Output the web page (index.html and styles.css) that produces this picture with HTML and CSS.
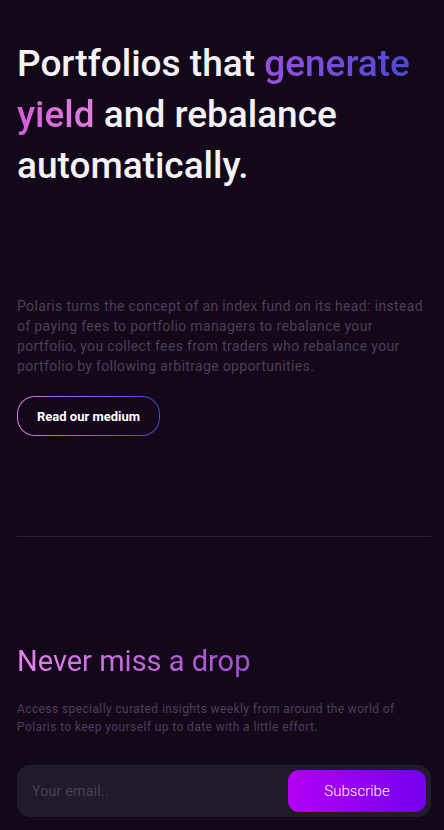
FILE: index.html
```html
<!DOCTYPE html>
<html>
<head>
<meta charset="utf-8">
<link rel="stylesheet" href="styles.css">
</head>
<body>
<main class="page">
  <section class="hero">
    <h1 class="hero-title">Portfolios that <span class="grad-a">generate</span> <span class="grad-b">yield</span> and rebalance <span>automatically.</span></h1>
    <p class="hero-text">Polaris turns the concept of an index fund on its head: instead of paying fees to portfolio managers to rebalance your portfolio, you collect fees from traders who rebalance your portfolio by following arbitrage opportunities.</p>
    <a class="outline-btn" href="#"><span>Read our medium</span></a>
  </section>
  <hr class="divider">
  <section class="news">
    <h2 class="news-title">Never miss a drop</h2>
    <p class="news-text">Access specially curated insights weekly from around the world of Polaris to keep yourself up to date with a little effort.</p>
    <form class="subscribe">
      <input class="email" type="text" placeholder="Your email..">
      <button class="sub-btn" type="button">Subscribe</button>
    </form>
  </section>
</main>
</body>
</html>
```
FILE: styles.css
```css
* { box-sizing: border-box; }
html, body { margin: 0; padding: 0; background: #13071a; }
body { font-family: Roboto, "Noto Sans", sans-serif; color: #fff; }
.page { padding: 0 13px 0 17px; }
.hero { padding-top: 38px; }
.hero-title {
  margin: 0;
  font-size: 37px;
  line-height: 51px;
  font-weight: 500;
  color: #f4f2f6;
}
.grad-a {
  background: linear-gradient(90deg, #9a4fe0, #4a4ad0);
  -webkit-background-clip: text; background-clip: text; color: transparent;
}
.grad-b {
  background: linear-gradient(90deg, #d45ed8, #e080e0);
  -webkit-background-clip: text; background-clip: text; color: transparent;
}
.hero-text {
  margin: 105px 0 0;
  font-size: 14px;
  line-height: 20px;
  letter-spacing: 0.35px;
  color: #4b3f56;
}
.outline-btn {
  margin-top: 20px;
  display: inline-flex;
  width: 143px; height: 40px;
  border-radius: 18px;
  padding: 1px;
  background: linear-gradient(90deg, #e070e0, #4a3fd8);
  text-decoration: none;
}
.outline-btn span {
  flex: 1;
  display: flex; align-items: center; justify-content: center;
  border-radius: 17px;
  background: #13071a;
  color: #fff;
  font-size: 13px;
  font-weight: 700;
}
.divider {
  margin: 100px 0 0;
  border: 0;
  height: 1px;
  background: #2a1f33;
}
.news { padding-top: 106px; }
.news-title {
  margin: 0;
  font-size: 29px;
  line-height: 36px;
  font-weight: 400;
  background: linear-gradient(90deg, #e682ec, #a451d2);
  -webkit-background-clip: text; background-clip: text; color: transparent;
  display: inline-block;
}
.news-text {
  margin: 21px 0 0;
  font-size: 12px;
  line-height: 18px;
  letter-spacing: 0.4px;
  color: #4b3f5c;
}
.subscribe {
  margin-top: 29px;
  display: flex;
  align-items: center;
  height: 52px;
  background: #211a29;
  border-radius: 13px;
  padding: 5px 5px 5px 15px;
}
.email {
  flex: 1;
  min-width: 0;
  padding: 0;
  background: transparent;
  border: 0;
  outline: none;
  font-family: inherit;
  font-size: 14px;
  letter-spacing: 0.3px;
  color: #fff;
}
.email::placeholder { color: #4a4052; }
.sub-btn {
  width: 138px; height: 42px;
  border: 0;
  border-radius: 11px;
  background: linear-gradient(90deg, #b300f5, #7400ef);
  color: #fff;
  font-family: inherit;
  font-size: 15px;
  font-weight: 300;
}
```
